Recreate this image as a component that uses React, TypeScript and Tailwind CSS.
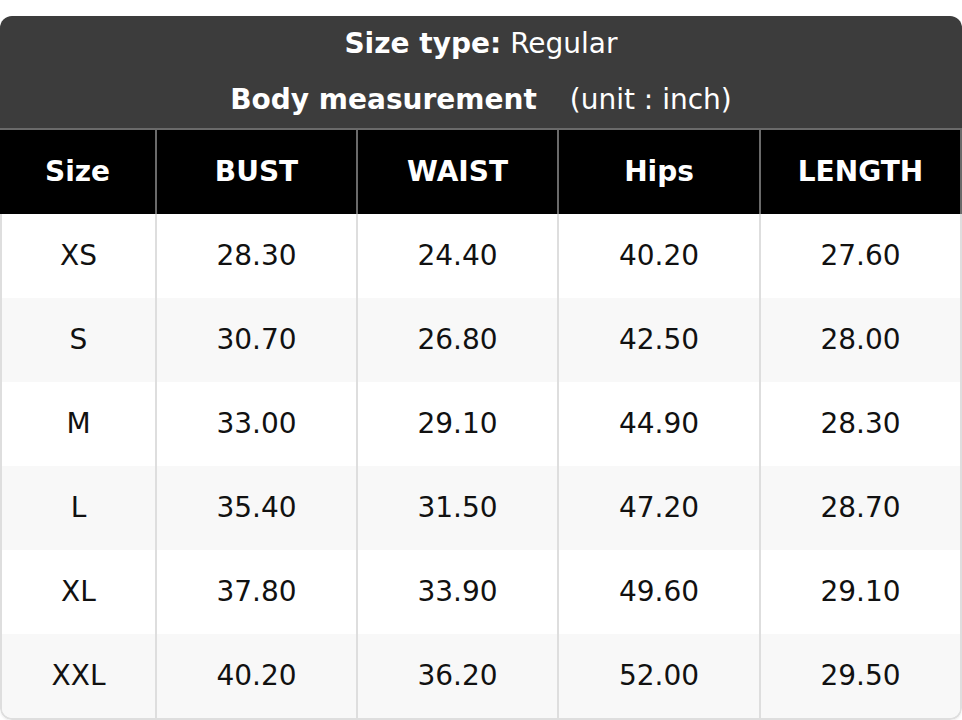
const columns = ["Size", "BUST", "WAIST", "Hips", "LENGTH"];

const rows = [
  ["XS", "28.30", "24.40", "40.20", "27.60"],
  ["S", "30.70", "26.80", "42.50", "28.00"],
  ["M", "33.00", "29.10", "44.90", "28.30"],
  ["L", "35.40", "31.50", "47.20", "28.70"],
  ["XL", "37.80", "33.90", "49.60", "29.10"],
  ["XXL", "40.20", "36.20", "52.00", "29.50"],
];

export default function App() {
  return (
    <div className="bg-white pt-[16px] font-['DejaVu_Sans',sans-serif] text-[28px]">
      <div className="rounded-[12px] overflow-hidden shadow-[0_1px_2px_rgba(0,0,0,0.08)]">
        {/* title block */}
        <div className="bg-[#3c3c3c] text-white border-b-2 border-[#6a6a6a]">
          <div className="h-[56px] flex items-center justify-center">
            <span className="font-bold">Size type:</span>
            <span className="ml-[9px]">Regular</span>
          </div>
          <div className="h-[56px] flex items-center justify-center">
            <span className="font-bold">Body measurement</span>
            <span className="ml-[33px]">(unit : inch)</span>
          </div>
        </div>

        {/* column headers */}
        <div className="grid grid-cols-[155px_201px_201px_202px_1fr] bg-black text-white font-bold h-[84px] border-r-2 border-[#6a6a6a]">
          {columns.map((c, i) => (
            <div
              key={c}
              className={`flex items-center justify-center ${i > 0 ? "border-l-2 border-[#6a6a6a]" : ""}`}
            >
              {c}
            </div>
          ))}
        </div>

        {/* measurements */}
        <div className="border-x-2 border-b-2 border-[#dedede] rounded-b-[12px] overflow-hidden text-[#111]">
          {rows.map((r, ri) => (
            <div
              key={r[0]}
              className={`grid grid-cols-[153px_201px_201px_202px_1fr] h-[84px] ${ri % 2 === 1 ? "bg-[#f8f8f8]" : "bg-white"}`}
            >
              {r.map((v, i) => (
                <div
                  key={i}
                  className={`flex items-center justify-center ${i > 0 ? "border-l-2 border-[#dedede]" : ""}`}
                >
                  {v}
                </div>
              ))}
            </div>
          ))}
        </div>
      </div>
    </div>
  );
}
